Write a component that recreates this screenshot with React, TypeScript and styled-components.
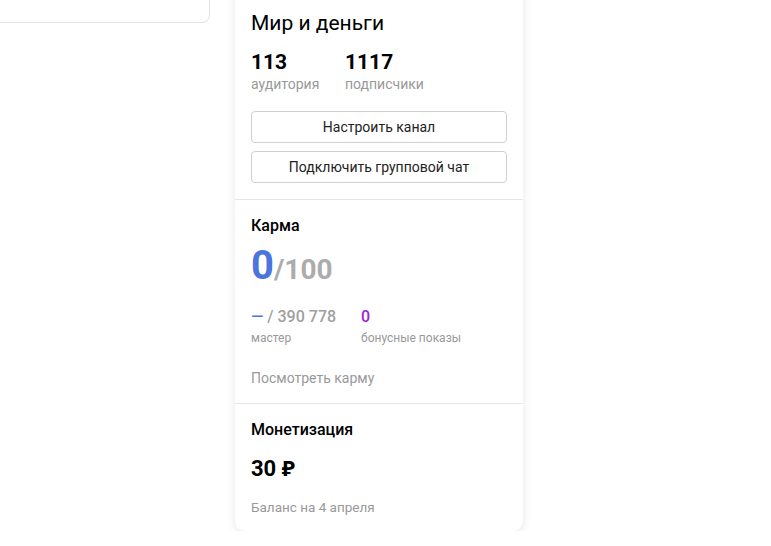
import React from "react";
import styled, { createGlobalStyle } from "styled-components";

const GlobalStyle = createGlobalStyle`
  html, body {
    margin: 0;
    padding: 0;
    background: #fff;
    font-family: Roboto, "Noto Sans", Arial, sans-serif;
    color: #000;
    overflow: hidden;
  }
`;

const Page = styled.div`
  display: flex;
  align-items: flex-start;
  gap: 25px;
  margin-top: -20px;
`;

const LeftCard = styled.div`
  width: 209px;
  height: 41px;
  flex-shrink: 0;
  border: 1px solid #e3e3e3;
  border-left: none;
  border-radius: 0 0 8px 0;
  background: #fff;
`;

const Card = styled.div`
  width: 288px;
  background: #fff;
  border-radius: 0 0 10px 10px;
  box-shadow: 0 2px 10px rgba(0, 0, 0, 0.1);
`;

const Section = styled.section<{ $pt?: number; $pb?: number }>`
  padding: ${(p) => p.$pt ?? 14}px 16px ${(p) => p.$pb ?? 16}px;
  & + & {
    border-top: 1px solid #e6e6e6;
  }
`;

const Title = styled.h1`
  margin: 0;
  font-size: 21px;
  line-height: 26px;
  font-weight: 400;
`;

const SubTitle = styled.h2`
  margin: 0;
  font-size: 16px;
  line-height: 20px;
  font-weight: 500;
`;

const Stats = styled.div<{ $gap: number; $mt: number }>`
  display: flex;
  gap: ${(p) => p.$gap}px;
  margin-top: ${(p) => p.$mt}px;
`;

const Stat = styled.div<{ $w?: number }>`
  display: flex;
  flex-direction: column;
  width: ${(p) => (p.$w ? `${p.$w}px` : "auto")};
`;

const StatValue = styled.span`
  font-size: 21px;
  line-height: 26px;
  font-weight: 700;
`;

const Caption = styled.span<{ $size?: number; $mt?: number }>`
  margin-top: ${(p) => p.$mt ?? 0}px;
  font-size: ${(p) => p.$size ?? 14}px;
  line-height: 18px;
  color: #999;
`;

const Buttons = styled.div`
  display: flex;
  flex-direction: column;
  gap: 8px;
  margin-top: 18px;
`;

const Button = styled.button`
  height: 32px;
  border: 1px solid #cfcfcf;
  border-radius: 4px;
  background: #fff;
  font-family: inherit;
  font-size: 14px;
  color: #222;
  cursor: pointer;
`;

const Score = styled.div`
  margin-top: 8px;
  display: flex;
  align-items: baseline;
  line-height: 44px;
`;

const ScoreValue = styled.span`
  font-size: 40px;
  font-weight: 700;
  color: #4a74de;
`;

const ScoreMax = styled.span`
  font-size: 28px;
  font-weight: 700;
  color: #acacac;
`;

const SmallValue = styled.span<{ $color: string }>`
  font-size: 16px;
  line-height: 20px;
  font-weight: 500;
  color: ${(p) => p.$color};
`;

const Dash = styled.span`
  color: #4a74de;
`;

const Link = styled.a`
  display: block;
  margin-top: 22px;
  font-size: 14px;
  line-height: 18px;
  color: #999;
  text-decoration: none;
`;

const Money = styled.div`
  margin-top: 13px;
  font-size: 22px;
  line-height: 28px;
  font-weight: 700;
`;

const Ruble = styled.span`
  font-family: "Noto Sans", "DejaVu Sans", sans-serif;
`;

const Balance = styled.div`
  margin-top: 15px;
  font-size: 13.5px;
  line-height: 18px;
  color: #999;
`;

export default function App() {
  return (
    <>
      <GlobalStyle />
      <Page>
        <LeftCard />
        <Card>
          <Section $pt={30} $pb={16}>
            <Title>Мир и деньги</Title>
            <Stats $gap={24} $mt={13}>
              <Stat $w={70}>
                <StatValue>113</StatValue>
                <Caption>аудитория</Caption>
              </Stat>
              <Stat>
                <StatValue>1117</StatValue>
                <Caption>подписчики</Caption>
              </Stat>
            </Stats>
            <Buttons>
              <Button>Настроить канал</Button>
              <Button>Подключить групповой чат</Button>
            </Buttons>
          </Section>
          <Section $pt={16} $pb={16}>
            <SubTitle>Карма</SubTitle>
            <Score>
              <ScoreValue>0</ScoreValue>
              <ScoreMax>/100</ScoreMax>
            </Score>
            <Stats $gap={24} $mt={15}>
              <Stat $w={86}>
                <SmallValue $color="#a0a0a0">
                  <Dash>—</Dash> / 390 778
                </SmallValue>
                <Caption $size={12} $mt={2}>
                  мастер
                </Caption>
              </Stat>
              <Stat>
                <SmallValue $color="#9c1fd6">0</SmallValue>
                <Caption $size={12} $mt={2}>
                  бонусные показы
                </Caption>
              </Stat>
            </Stats>
            <Link href="#">Посмотреть карму</Link>
          </Section>
          <Section $pt={16} $pb={15}>
            <SubTitle>Монетизация</SubTitle>
            <Money>
              30 <Ruble>₽</Ruble>
            </Money>
            <Balance>Баланс на 4 апреля</Balance>
          </Section>
        </Card>
      </Page>
    </>
  );
}
